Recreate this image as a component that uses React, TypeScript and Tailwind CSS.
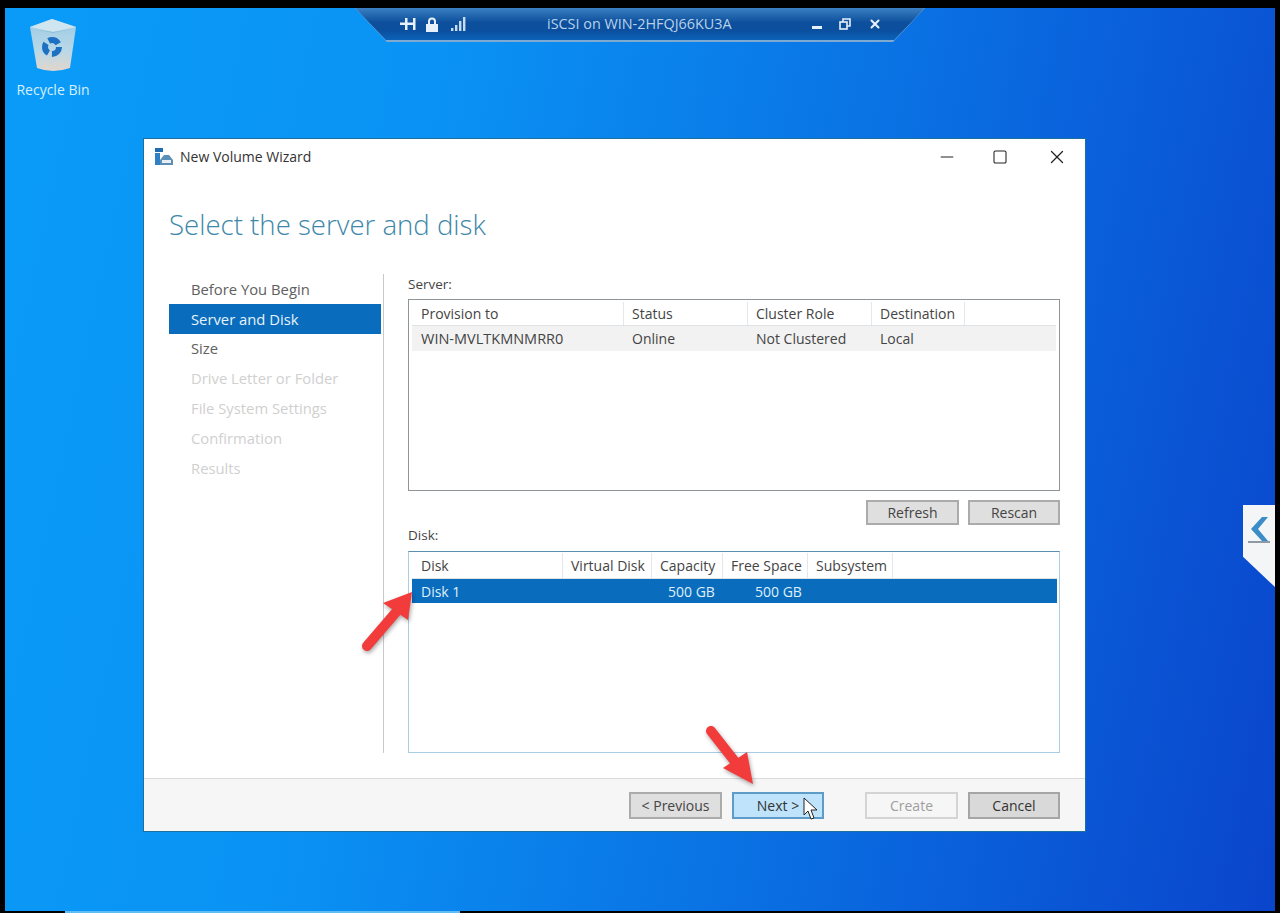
import * as React from "react";
import { Minus, X, Square } from "lucide-react";

const steps = [
  { label: "Before You Begin", cls: "text-[#606060]" },
  { label: "Server and Disk", cls: "bg-[#0a6cbc] text-[#e6f3fb]" },
  { label: "Size", cls: "text-[#606060]" },
  { label: "Drive Letter or Folder", cls: "text-[#d0d0d0]" },
  { label: "File System Settings", cls: "text-[#d0d0d0]" },
  { label: "Confirmation", cls: "text-[#d0d0d0]" },
  { label: "Results", cls: "text-[#d0d0d0]" },
];

const RecycleBin = () => (
  <svg width="50" height="54" viewBox="0 0 50 54">
    <defs>
      <linearGradient id="binBody" x1="0" y1="0" x2="0" y2="1">
        <stop offset="0" stopColor="#9ccbe4" />
        <stop offset="0.6" stopColor="#b8d8e8" />
        <stop offset="1" stopColor="#e2d6cc" />
      </linearGradient>
    </defs>
    <path d="M2 9 L24 1 L48 9 L42 50 Q25 56 9 50 Z" fill="url(#binBody)" />
    <path d="M2 9 L24 1 L48 9 L25 14 Z" fill="#cfe5f0" />
    <path d="M6 11 L25 15 L44 11 L25 14 Z" fill="#8fbcd6" />
    <circle
      cx="24"
      cy="29"
      r="7"
      fill="none"
      stroke="#1d70c2"
      strokeWidth="6"
      strokeDasharray="11 3.66"
    />
  </svg>
);

const WindowIcon = () => (
  <svg width="19" height="19" viewBox="0 0 19 19">
    <rect x="0" y="1" width="8" height="4" fill="#1f6cb0" />
    <rect x="0" y="6" width="5" height="12" fill="#2f80c4" />
    <path d="M5 13 L9 8 H14 L18 13 V18 H5 Z" fill="#5a8fb8" />
    <rect x="7" y="13" width="9" height="3" fill="#e8eef3" />
  </svg>
);

const HeaderCell = ({ w, children }: { w: string; children?: React.ReactNode }) => (
  <div className={`${w} h-full flex items-center px-2 border-r border-[#e4e8ec] whitespace-nowrap`}>{children}</div>
);

const Btn = ({ w, cls, children }: { w: string; cls: string; children: React.ReactNode }) => (
  <div className={`${w} flex items-center justify-center text-[14px] border-2 ${cls}`}>{children}</div>
);

const grayBtn = "bg-[#dfdfdf] border-[#ababab] text-[#444]";

export default function App() {
  return (
    <div className="relative h-[913px] w-[1280px] overflow-hidden bg-black pt-2 pl-[5px] pr-[5px] pb-[2px] font-['Open_Sans','Noto_Sans',sans-serif]">
      <div className="relative h-full bg-[linear-gradient(102deg,#0a9bf8_0%,#0a93f4_30%,#0a72e4_62%,#0a45cc_100%)] pl-[138px] pt-[130px]">
        {/* recycle bin */}
        <div className="absolute left-[7px] top-[10px] w-[82px] flex flex-col items-center">
          <RecycleBin />
          <span className="mt-[8px] text-[14px] leading-5 text-[#d6efff]">Recycle Bin</span>
        </div>

        {/* remote connection bar */}
        <div className="absolute left-[350px] top-0 w-[570px] h-[34px] bg-[#7ea9d0] [clip-path:polygon(0_0,100%_0,94.4%_100%,5.6%_100%)]">
          <div className="h-[32px] bg-[linear-gradient(180deg,#3a80c2_0%,#0d4f9c_45%,#0b4f9e_70%,#0b62b8_100%)] [clip-path:polygon(0_0,100%_0,94.6%_100%,5.4%_100%)] flex items-center text-[#e6f0fa]">
            <div className="w-[192px] flex items-center pl-[45px] gap-[9px]">
              <svg width="16" height="12" viewBox="0 0 16 12" fill="#e6f0fa">
                <path d="M0 4.5 H5 V7 H0 Z M5 0 H7.5 V12 H5 Z M7.5 4.5 H13 V7 H7.5 Z M13 0 H15.5 V12 H13 Z" />
              </svg>
              <svg width="14" height="15" viewBox="0 0 14 15" fill="#e6f0fa">
                <path d="M1 7 H3 V4.5 A4 4 0 0 1 11 4.5 V7 H13 V15 H1 Z M5 7 H9 V4.5 A2 2 0 0 0 5 4.5 Z" fillRule="evenodd" />
              </svg>
              <svg className="ml-[3px]" width="16" height="14" viewBox="0 0 16 14" fill="#c8dcf0">
                <rect x="0" y="11" width="2.4" height="3" />
                <rect x="4" y="8" width="2.4" height="6" />
                <rect x="8" y="4" width="2.4" height="10" />
                <rect x="12" y="0" width="2.4" height="14" />
              </svg>
            </div>
            <span className="text-[14.4px] w-[265px] text-[#b9d2ea] whitespace-nowrap">iSCSI on WIN-2HFQJ66KU3A</span>
            <div className="flex items-center">
              <div className="w-[10px] h-[3px] bg-[#e6f0fa] mt-[7px] mr-[17px]" />
              <svg width="12" height="12" viewBox="0 0 12 12" fill="none" stroke="#e6f0fa" strokeWidth="1.6" className="mr-[17px]">
                <rect x="1" y="4" width="7" height="7" />
                <path d="M4 4 V1 H11 V8 H8" />
              </svg>
              <X size={14} strokeWidth={3.5} />
            </div>
          </div>
        </div>

        {/* side panel tab */}
        <div className="absolute right-0 top-[497px] w-[32px] h-[82px] bg-[#f4f5f7] [clip-path:polygon(0_0,100%_0,100%_100%,0_63%)] flex flex-col items-center pt-[12px]">
          <svg width="18" height="24" viewBox="0 0 18 24">
            <path d="M12 0 H18 L8 12 L18 24 H12 L1 12 Z" fill="#3a8dc6" />
          </svg>
          <div className="w-[22px] h-[2px] bg-[#8d9aa6]" />
        </div>

        {/* window */}
        <div className="relative w-[943px] h-[694px] bg-white border border-[#1d6f9c] flex flex-col text-[#4a4a4a]">
          <div className="h-[35px] flex items-center pl-[11px] shrink-0">
            <WindowIcon />
            <span className="ml-[6px] text-[14px] text-[#333]">New Volume Wizard</span>
            <div className="ml-auto flex items-center text-[#222]">
              <Minus size={20} strokeWidth={1.3} className="mr-[35px]" />
              <Square size={16} strokeWidth={1.6} className="mr-[38px]" />
              <X size={22} strokeWidth={1.4} className="mr-[17px]" />
            </div>
          </div>

          <h1 className="pl-[25px] mt-[30px] h-[40px] text-[27.6px] leading-10 text-[#3d87a8] font-light">Select the server and disk</h1>

          <div className="flex mt-[30px] h-[479px] shrink-0">
            <div className="w-[240px] pl-[25px] pr-[1px] border-r border-[#c9c9c9] shrink-0 mr-[24px]">
              <div className="w-[212px]">
                {steps.map((s) => (
                  <div key={s.label} className={`h-[29.8px] flex items-center pl-[22px] text-[14.8px] ${s.cls}`}>
                    {s.label}
                  </div>
                ))}
              </div>
            </div>

            <div className="w-[652px] flex flex-col text-[14px] text-[#444]">
              <div className="h-[25px] pb-[4px] flex items-center text-[13.5px]">Server:</div>

              <div className="h-[192px] border border-[#8f9499] px-[3px] pt-[2px] shrink-0">
                <div className="h-[24px] flex border-b border-[#dfe3e6]">
                  <HeaderCell w="w-[212px] pl-[9px]">Provision to</HeaderCell>
                  <HeaderCell w="w-[124px]">Status</HeaderCell>
                  <HeaderCell w="w-[124px]">Cluster Role</HeaderCell>
                  <HeaderCell w="w-[93px]">Destination</HeaderCell>
                </div>
                <div className="h-[25px] flex items-center bg-[#f2f2f2]">
                  <div className="w-[212px] pl-[9px] text-[14.5px]">WIN-MVLTKMNMRR0</div>
                  <div className="w-[124px] px-2">Online</div>
                  <div className="w-[124px] px-2">Not Clustered</div>
                  <div className="w-[93px] px-2">Local</div>
                </div>
              </div>

              <div className="flex justify-end gap-[9px] mt-[9px]">
                <Btn w="w-[93px] h-[25px]" cls={grayBtn}>Refresh</Btn>
                <Btn w="w-[92px] h-[25px]" cls={grayBtn}>Rescan</Btn>
              </div>

              <div className="h-[26px] pb-[6px] flex items-center text-[13.5px]">Disk:</div>

              <div className="h-[202px] border border-[#a9cde4] border-t-[#5b8fb3] pl-[3px] pr-[2px] pt-px shrink-0">
                <div className="h-[26px] flex border-b border-[#dfe3e6] px-px">
                  <HeaderCell w="w-[150px]">Disk</HeaderCell>
                  <HeaderCell w="w-[89px]">Virtual Disk</HeaderCell>
                  <HeaderCell w="w-[71px]">Capacity</HeaderCell>
                  <HeaderCell w="w-[85px]">Free Space</HeaderCell>
                  <HeaderCell w="w-[85px]">Subsystem</HeaderCell>
                </div>
                <div className="h-[24px] flex items-center bg-[#0a6cbc] text-[#dff0fb]">
                  <div className="w-[240px] pl-[9px]">Disk 1</div>
                  <div className="w-[71px] pl-[16px]">500 GB</div>
                  <div className="w-[85px] pl-[32px] whitespace-nowrap">500 GB</div>
                </div>
              </div>
            </div>
          </div>

          <div className="mt-[25px] flex-1 bg-[#f6f6f6] border-t border-[#dcdcdc] flex items-center pl-[485px] pt-[1px]">
            <Btn w="w-[93px] h-[27px]" cls={`${grayBtn} mr-[10px]`}>&lt; Previous</Btn>
            <Btn w="w-[92px] h-[27px]" cls="bg-[#bfe3fb] border-[#5d9cc9] text-[#333] mr-[41px]">Next &gt;</Btn>
            <Btn w="w-[93px] h-[27px]" cls="bg-[#f6f6f6] border-[#d4d4d4] text-[#9e9e9e] mr-[10px]">Create</Btn>
            <Btn w="w-[92px] h-[27px]" cls="bg-[#d9d9d9] border-[#a5a5a5] text-[#333]">Cancel</Btn>
          </div>

          {/* annotations */}
          <svg className="absolute left-[211px] top-[446px] drop-shadow-[1px_2px_2px_rgba(0,0,0,0.35)]" width="65" height="70" viewBox="0 0 65 70">
            <path d="M12 61 L42 26" stroke="#f23c3c" strokeWidth="10" strokeLinecap="round" />
            <path d="M57 7 L28 18 L53 35 Z" fill="#f23c3c" />
          </svg>
          <svg className="absolute left-[556px] top-[581px] drop-shadow-[1px_2px_2px_rgba(0,0,0,0.35)]" width="60" height="70" viewBox="0 0 60 70">
            <path d="M11 11 L40 48" stroke="#f23c3c" strokeWidth="10" strokeLinecap="round" />
            <path d="M53 64 L23 48 L47 32 Z" fill="#f23c3c" />
          </svg>
          <svg className="absolute left-[659px] top-[658px]" width="17" height="25" viewBox="0 0 17 25">
            <path d="M1 1 L1 18 L5 14 L8 22 L11 21 L8 13 L14 13 Z" fill="#fff" stroke="#222" strokeWidth="1" />
          </svg>
        </div>

        {/* taskbar sliver */}
        <div className="absolute left-[60px] bottom-[-2px] w-[395px] h-[2px] bg-[#5fbdf5]" />
      </div>
    </div>
  );
}
